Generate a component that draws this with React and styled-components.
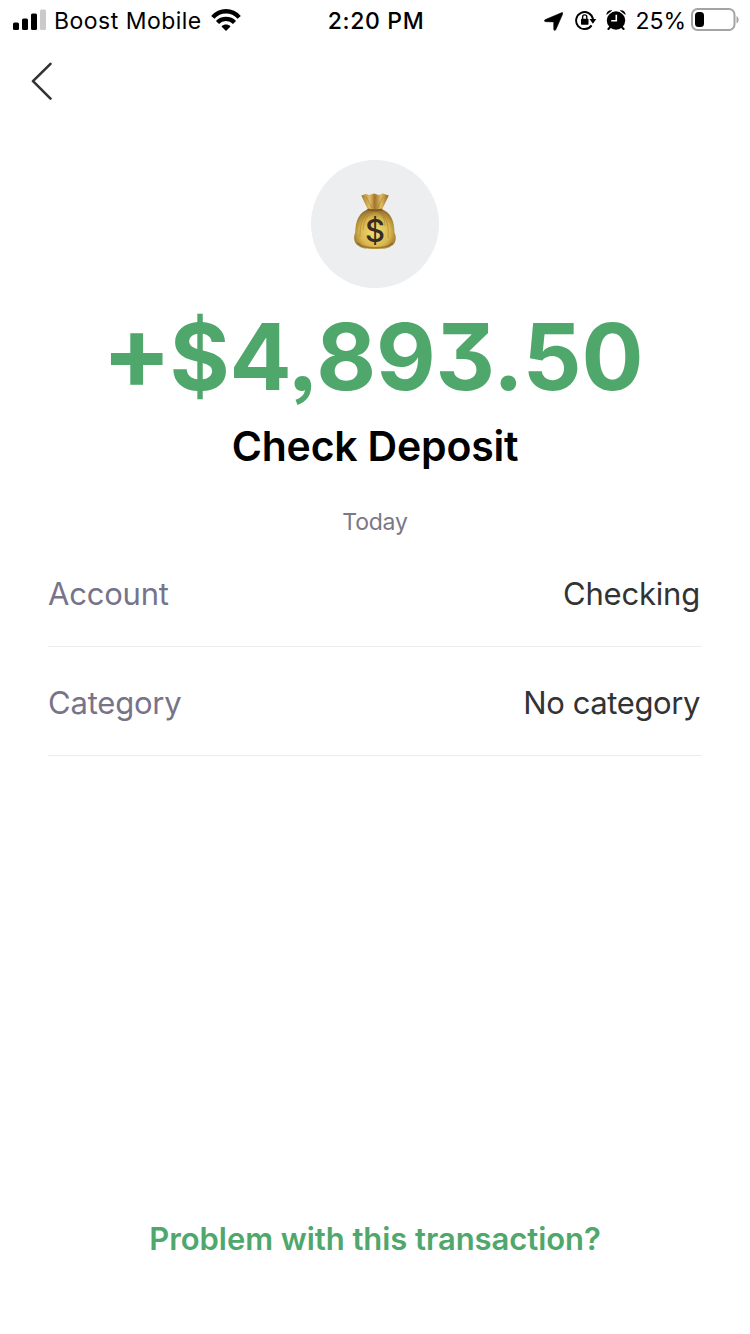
import React from "react";
import styled, { createGlobalStyle } from "styled-components";

const GlobalStyle = createGlobalStyle`
  * { box-sizing: border-box; }
  body { margin: 0; background: #fff; font-family: Inter, "Liberation Sans", sans-serif; }
`;

const Screen = styled.main`
  width: 750px;
  height: 1334px;
  display: flex;
  flex-direction: column;
  background: #fff;
  overflow: hidden;
`;

const StatusBar = styled.header`
  height: 40px;
  display: grid;
  grid-template-columns: 1fr auto 1fr;
  align-items: center;
  padding: 0 11px 0 13px;
  color: #000;
  font-size: 23px;
  line-height: 38px;
  svg { display: block; }
`;

const StatusGroup = styled.div`
  display: flex;
  align-items: center;
  justify-content: ${(p) => (p.$end ? "flex-end" : "flex-start")};
`;

const StatusText = styled.span`
  padding-top: 2px;
  white-space: nowrap;
  font-weight: ${(p) => p.$weight || 400};
  letter-spacing: ${(p) => p.$spacing || 0}px;
  margin: ${(p) => p.$margin || 0};
`;

const StatusIcon = styled.span`
  margin-left: ${(p) => p.$gap}px;
  padding-top: ${(p) => p.$drop || 0}px;
`;

const NavBar = styled.nav`
  height: 80px;
  padding: 22px 0 0 30px;
`;

const BackButton = styled.button`
  display: block;
  padding: 0;
  border: 0;
  background: none;
  svg { display: block; }
`;

const Summary = styled.section`
  display: flex;
  flex-direction: column;
  align-items: center;
  padding-top: 40px;
`;

const Avatar = styled.div`
  width: 128px;
  height: 128px;
  border-radius: 50%;
  background: #eceeef;
  display: flex;
  align-items: center;
  justify-content: center;
  padding-bottom: 5px;
  svg { display: block; }
`;

const Amount = styled.h1`
  height: 112px;
  margin: 12px 0 0;
  font-size: 92px;
  line-height: 112px;
  font-weight: 700;
  letter-spacing: -0.2px;
  font-feature-settings: "cv09" 1, "ss03" 1;
  color: #50a76c;
  white-space: nowrap;
`;

const AmountSign = styled.span`
  display: inline-block;
  font-size: 103px;
  line-height: 1;
  margin: 0 -2px 0 -5px;
  vertical-align: 1px;
`;

const Title = styled.h2`
  margin: 9px 0 0;
  font-size: 41px;
  line-height: 50px;
  font-weight: 600;
  letter-spacing: -0.2px;
  color: #000;
`;

const DateLabel = styled.p`
  margin: 36px 0 0;
  font-size: 23px;
  line-height: 30px;
  letter-spacing: -0.2px;
  color: #7a7885;
`;

const Details = styled.dl`
  margin: 1px 48px 0;
`;

const DetailRow = styled.div`
  height: 109px;
  display: flex;
  justify-content: space-between;
  align-items: center;
  padding: 3px 2px 0 0;
  border-bottom: 1px solid #ededee;
  font-size: 31px;
  line-height: 40px;
`;

const DetailLabel = styled.dt`
  color: #77748a;
  letter-spacing: -0.2px;
`;

const DetailValue = styled.dd`
  margin: 0;
  color: #333;
  letter-spacing: ${(p) => p.$spacing}px;
`;

const Footer = styled.footer`
  margin-top: auto;
  padding-bottom: 75px;
  display: flex;
  justify-content: center;
`;

const ProblemLink = styled.button`
  padding: 0;
  border: 0;
  background: none;
  font: 600 31px/40px Inter, "Liberation Sans", sans-serif;
  letter-spacing: -0.06px;
  color: #50a76c;
  white-space: nowrap;
`;

const SignalIcon = () => (
  <svg width="33" height="22" viewBox="0 0 33 22">
    <rect x="0" y="13.5" width="6" height="7.5" rx="1.5" />
    <rect x="9" y="9.5" width="6" height="11.5" rx="1.5" />
    <rect x="18" y="4.5" width="6" height="16.5" rx="1.5" />
    <rect x="27" y="0.5" width="6" height="20.5" rx="1.5" fill="#cacaca" />
  </svg>
);

const WifiIcon = () => (
  <svg width="30" height="22" viewBox="0 0 30 22">
    <g fill="none" stroke="#000" strokeWidth="4.3">
      <path d="M1.8 8.4C9 .2 21 .2 28.2 8.4" />
      <path d="M6.5 13.4C11 8.8 19 8.8 23.5 13.4" />
    </g>
    <path d="M10.5 17.4C13 15 17 15 19.5 17.4L15 21.9Z" />
  </svg>
);

const LocationIcon = () => (
  <svg width="19" height="19" viewBox="0 0 18 18">
    <path d="M16.5.7C17.6.1 18.2.8 17.7 1.9L11.2 16.7c-.5 1.1-2 .9-2-.5V9.4L1.7 9.2C.1 9 0 7.8 1.3 7.2Z" stroke="#000" strokeWidth=".5" />
  </svg>
);

const RotationLockIcon = () => (
  <svg width="22" height="20" viewBox="0 0 22 20">
    <path d="M16.6 15.4A8.5 8.5 0 1 1 18 9.2" fill="none" stroke="#000" strokeWidth="1.9" />
    <path d="M14.5 9h6.8l-3.4 4.7Z" />
    <rect x="6" y="8.7" width="7.5" height="6" rx=".8" />
    <path d="M7.6 9V7a2.1 2.1 0 0 1 4.2 0v2" fill="none" stroke="#000" strokeWidth="1.4" />
  </svg>
);

const AlarmIcon = () => (
  <svg width="20" height="20" viewBox="0 0 20 20">
    <circle cx="10" cy="10.5" r="9.2" />
    <path d="M4.3 17 2.4 19M15.7 17l1.9 2" stroke="#000" strokeWidth="2" strokeLinecap="round" />
    <path d="M.5 5C.2 2 3-.3 6.2.4ZM19.5 5C19.8 2 17-.3 13.8.4Z" />
    <path d="m.7 6.1 6-5.2M19.3 6.1l-6-5.2" stroke="#fff" strokeWidth=".6" />
    <path d="M10.3 4.8v6H5.2" fill="none" stroke="#fff" strokeWidth="1.6" />
  </svg>
);

const BatteryIcon = () => (
  <svg width="48" height="24" viewBox="0 0 48 24">
    <rect x="1" y="1" width="42.5" height="21" rx="5.5" fill="#fff" stroke="#a4a4a4" strokeWidth="2" />
    <rect x="4" y="4" width="9" height="15" rx="3.5" />
    <path d="M45.5 8c2.8 1.3 2.8 6.2 0 7.5Z" fill="#a4a4a4" />
  </svg>
);

const MoneyBagIcon = () => (
  <svg width="44" height="58" viewBox="0 0 44 58">
    <defs>
      <radialGradient id="bag" cx=".5" cy=".58" r=".6">
        <stop offset="0" stopColor="#f4df76" />
        <stop offset=".6" stopColor="#d9b84f" />
        <stop offset="1" stopColor="#8b6426" />
      </radialGradient>
      <linearGradient id="neck" x1="0" y1="0" x2="1" y2="0">
        <stop offset="0" stopColor="#a8782d" />
        <stop offset=".3" stopColor="#dfbd63" />
        <stop offset=".5" stopColor="#a37730" />
        <stop offset=".72" stopColor="#e0bd60" />
        <stop offset="1" stopColor="#936424" />
      </linearGradient>
    </defs>
    <path d="M8.3 2.6 13 1l3.2 1 4.8-1.4 4.8 1.4 4-1.4 6 2L28.8 17H15Z" fill="url(#neck)" />
    <path d="M15 16h13.8c8.8 4 12.4 10.6 12.7 23.5 2.6 5.4 1.2 11.3-3.7 13.8-2.3 2.1-6.5 2.7-15.8 2.7S8.7 55.4 6.1 53.3C1.1 50.8-.1 44.9 2.2 39.5 2.6 26.6 6.2 20 15 16Z" fill="url(#bag)" />
    <g fill="none" stroke="#936b28" strokeOpacity=".42" strokeWidth="1">
      <path d="M16 18C9 25 7 33 7 44M20 18c-7 5-9 11-10 19M27 18c7 6 9 17 8 27M24 18c5 2 8 8 8 15" />
      <path d="M13 3.5 19 15M21 3v12M30 3.5 24.5 15" />
    </g>
    <path d="M14.7 16.5q7.3 2.2 14.4 0" fill="none" stroke="#865b20" strokeWidth="2" />
    <path d="M4.5 50q5 4.8 17.5 4.8T39.5 50" fill="none" stroke="#765122" strokeOpacity=".55" strokeWidth="1.5" />
    <text x="22" y="48.8" textAnchor="middle" fontFamily="Inter, sans-serif" fontSize="31" fontWeight="500" fill="#382b20">$</text>
  </svg>
);

const details = [
  { label: "Account", value: "Checking", spacing: -0.2 },
  { label: "Category", value: "No category", spacing: -0.4 },
];

export default function App() {
  return (
    <Screen>
      <GlobalStyle />
      <StatusBar>
        <StatusGroup>
          <SignalIcon />
          <StatusText $spacing={0.48} $margin="0 9px 0 8px">Boost Mobile</StatusText>
          <WifiIcon />
        </StatusGroup>
        <StatusText $weight={500} $spacing={0.65}>2:20 PM</StatusText>
        <StatusGroup $end>
          <StatusIcon $gap={0} $drop={2}><LocationIcon /></StatusIcon>
          <StatusIcon $gap={12}><RotationLockIcon /></StatusIcon>
          <StatusIcon $gap={9}><AlarmIcon /></StatusIcon>
          <StatusText $margin="0 5px 0 9px">25%</StatusText>
          <BatteryIcon />
        </StatusGroup>
      </StatusBar>
      <NavBar>
        <BackButton aria-label="Back">
          <svg width="24" height="40" viewBox="0 0 24 40">
            <path d="M20.5 1.8 3 19.2 20.5 36.6" fill="none" stroke="#333" strokeWidth="2.6" strokeLinecap="round" strokeLinejoin="round" />
          </svg>
        </BackButton>
      </NavBar>
      <Summary>
        <Avatar><MoneyBagIcon /></Avatar>
        <Amount><AmountSign>+</AmountSign>$4,893.50</Amount>
        <Title>Check Deposit</Title>
        <DateLabel>Today</DateLabel>
      </Summary>
      <Details>
        {details.map((d) => (
          <DetailRow key={d.label}>
            <DetailLabel>{d.label}</DetailLabel>
            <DetailValue $spacing={d.spacing}>{d.value}</DetailValue>
          </DetailRow>
        ))}
      </Details>
      <Footer><ProblemLink>Problem with this transaction?</ProblemLink></Footer>
    </Screen>
  );
}
